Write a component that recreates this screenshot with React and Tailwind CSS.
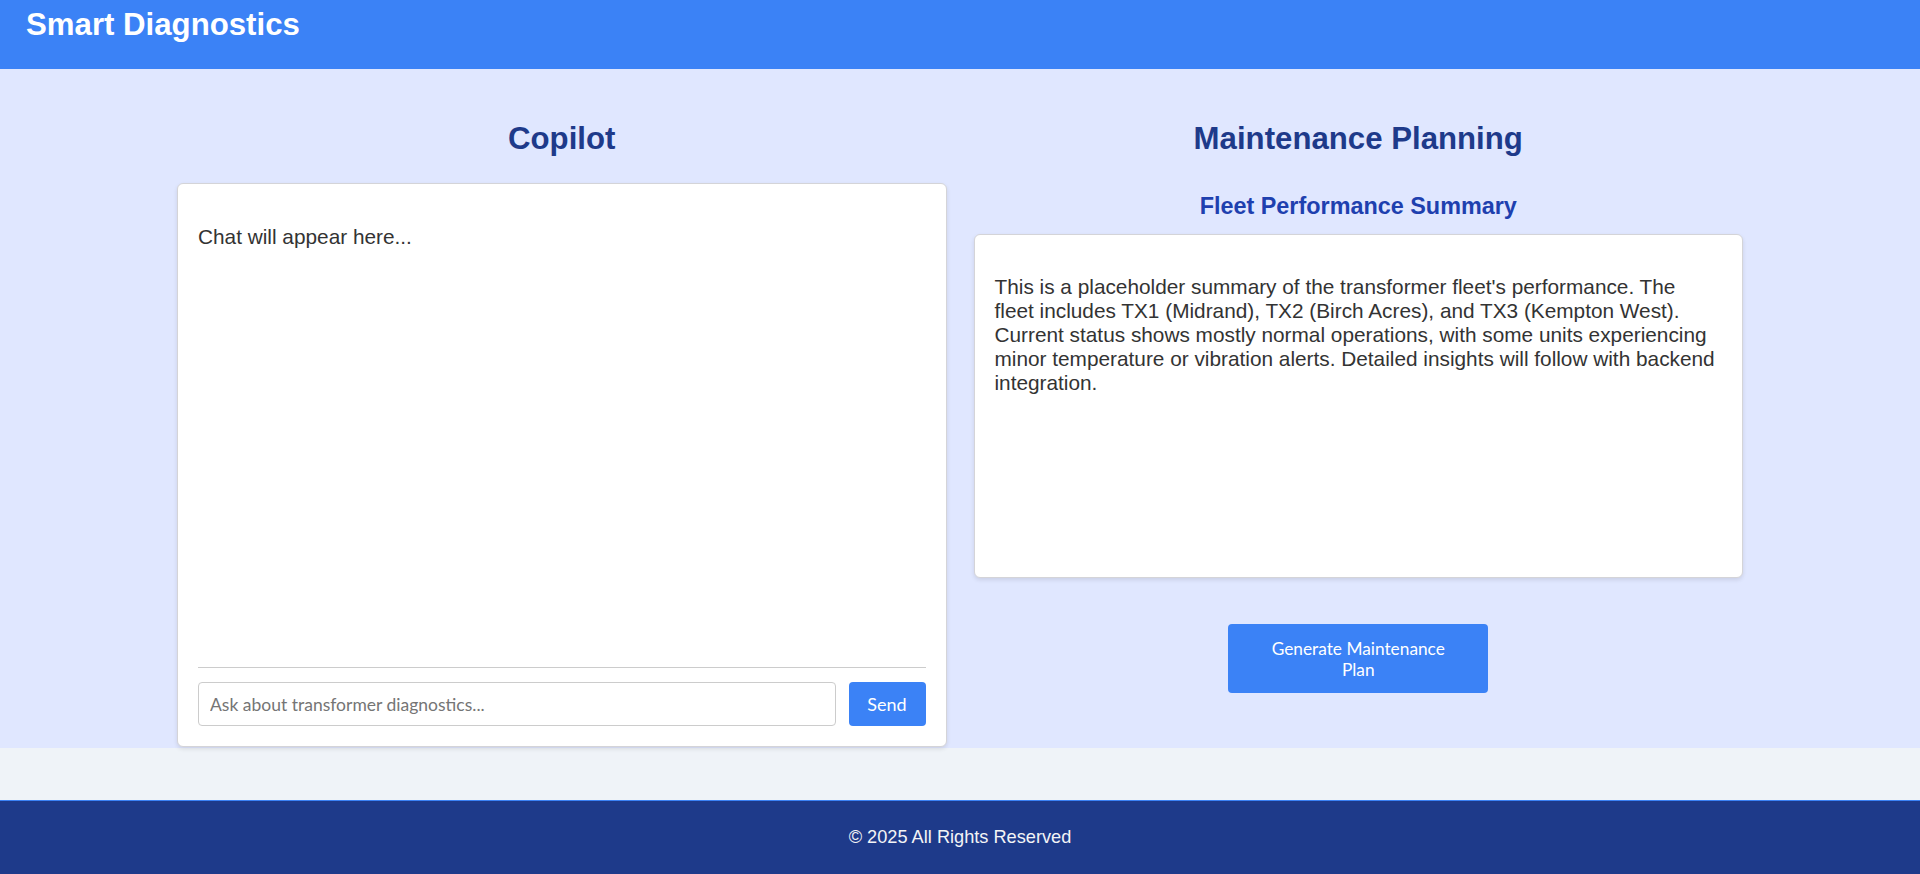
export default function App() {
  return (
    <div
      className="min-h-screen flex flex-col bg-[#eff3f8]"
      style={{ fontFamily: '"Liberation Sans", Arial, sans-serif' }}
    >
      <header className="h-[69px] bg-[#3b82f6] px-[26px] pt-[7px]">
        <h1 className="text-[31.2px] font-bold leading-[36px] text-white">Smart Diagnostics</h1>
      </header>

      <main className="bg-[#e0e7ff] pt-[52px] pb-[1px]">
        <div className="w-[1566px] mx-auto grid grid-cols-2 gap-[27px]">
          <section className="flex flex-col">
            <h2 className="text-center text-[31.2px] font-bold leading-[36px] text-[#1e3a8a]">Copilot</h2>
            <div className="mt-[26px] h-[564px] flex flex-col bg-white border border-[#d4d4d8] rounded-[6px] shadow-[0_2px_4px_rgba(0,0,0,0.1)] p-5">
              <div className="flex-1">
                <p className="mt-[21px] text-[20.8px] leading-[24px] text-[#333333]">Chat will appear here...</p>
              </div>
              <div className="border-t border-[#cccccc] pt-[14px] flex gap-[13px]" style={{ fontFamily: 'Lato, sans-serif' }}>
                <input
                  type="text"
                  placeholder="Ask about transformer diagnostics..."
                  className="flex-1 h-[44px] border border-[#cccccc] rounded-[4px] px-[11px] text-[17.5px] text-[#333] placeholder:text-[#757575] outline-none"
                />
                <button className="w-[77px] h-[44px] bg-[#3b82f6] text-white text-[18px] rounded-[4px]">Send</button>
              </div>
            </div>
          </section>

          <section className="flex flex-col">
            <h2 className="text-center text-[31.2px] font-bold leading-[36px] text-[#1e3a8a]">Maintenance Planning</h2>
            <h3 className="mt-[36px] text-center text-[23.4px] font-bold leading-[27px] text-[#1e40af]">Fleet Performance Summary</h3>
            <div className="mt-[14px] h-[344px] bg-white border border-[#d4d4d8] rounded-[6px] shadow-[0_2px_4px_rgba(0,0,0,0.1)] pl-5 pr-[23px] pt-5">
              <p className="mt-[20px] text-[20.8px] leading-[24px] text-[#333333]">
                This is a placeholder summary of the transformer fleet's performance. The fleet includes TX1 (Midrand), TX2 (Birch Acres), and TX3 (Kempton West). Current status shows mostly normal operations, with some units experiencing minor temperature or vibration alerts. Detailed insights will follow with backend integration.
              </p>
            </div>
            <div className="mt-[46px] flex justify-center">
              <button
                className="w-[260px] h-[69px] bg-[#3b82f6] text-white text-[17.3px] leading-[21px] rounded-[4px] px-[30px]"
                style={{ fontFamily: 'Lato, sans-serif' }}
              >
                Generate Maintenance Plan
              </button>
            </div>
          </section>
        </div>
      </main>

      <div className="flex-1" />

      <footer className="h-[74px] bg-[#1e3a8a] border-t border-[#3b82f6] flex items-center justify-center">
        <span className="text-[18.2px] text-[#f3f4f6]">© 2025 All Rights Reserved</span>
      </footer>
    </div>
  );
}
